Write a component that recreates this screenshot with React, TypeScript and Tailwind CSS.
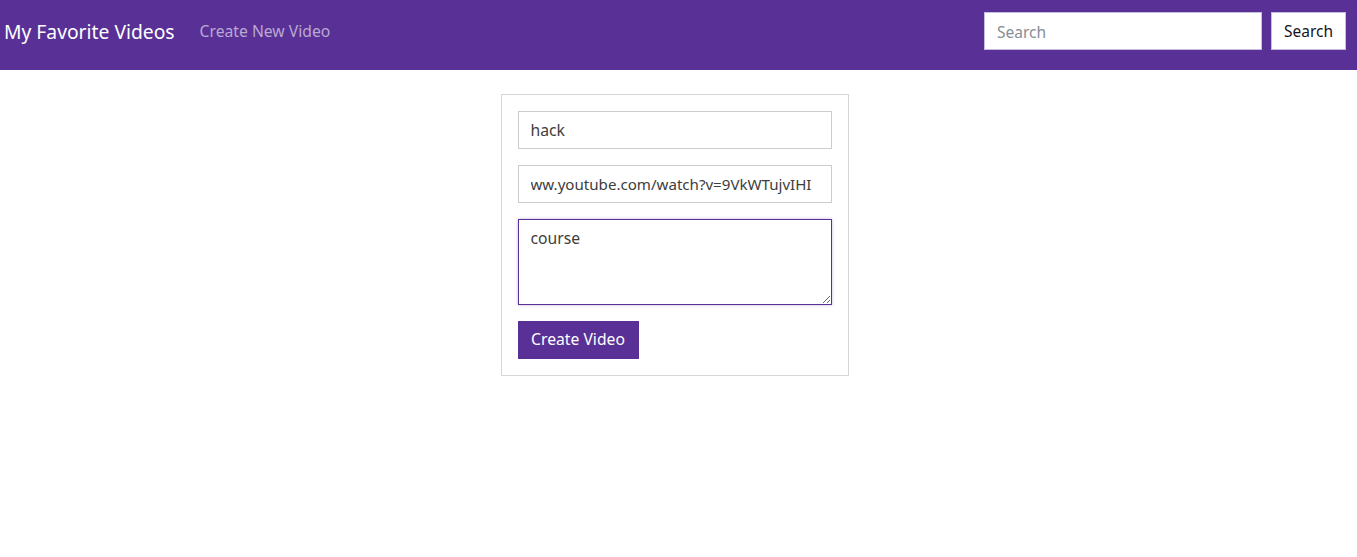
import React, { useState } from "react";

const App = () => {
  const [title, setTitle] = useState("hack");
  const [url, setUrl] = useState("ww.youtube.com/watch?v=9VkWTujvIHI");
  const [desc, setDesc] = useState("course");

  return (
    <div className="min-h-[557px] bg-white font-['Noto_Sans',sans-serif] text-[#444]">
      <nav className="flex h-[70px] items-start bg-[#593196] pl-[4px] pr-[11px] pt-[12px]">
        <a href="#" className="mr-[25px] flex h-[40px] items-center text-[19.3px] text-white">
          My Favorite Videos
        </a>
        <a href="#" className="flex h-[40px] items-center text-[15.7px] text-[#b9a8d3]">
          Create New Video
        </a>
        <form className="ml-auto flex gap-[9px]">
          <input
            type="text"
            placeholder="Search"
            className="h-[38px] w-[278px] border border-[#c7bcdb] bg-white px-[12px] pt-[1px] text-[15.5px] text-[#444] outline-none placeholder:text-[#868e96]"
          />
          <button
            type="button"
            className="h-[38px] w-[75px] border border-[#c7bcdb] bg-white pt-[1px] text-[15.5px] text-[#17141f]"
          >
            Search
          </button>
        </form>
      </nav>

      <div className="flex justify-center pr-[8px] pt-[24px]">
        <form className="flex w-[348px] flex-col gap-[16px] border border-[#d6d6d6] p-[16px]">
          <input
            type="text"
            value={title}
            onChange={(e) => setTitle(e.target.value)}
            className="h-[38px] w-full border border-[#cccccc] px-[12px] text-[15.7px] text-[#3d3d3d] outline-none"
          />
          <input
            type="text"
            value={url}
            onChange={(e) => setUrl(e.target.value)}
            className="h-[38px] w-full border border-[#cccccc] px-[12px] text-[15.1px] text-[#3d3d3d] outline-none"
          />
          <textarea
            value={desc}
            onChange={(e) => setDesc(e.target.value)}
            className="h-[86px] w-full border border-[#593196] px-[12px] py-[6px] text-[15.7px] leading-[24px] text-[#3d3d3d] shadow-[0_0_3px_rgba(89,49,150,0.35)] outline-none"
          />
          <div>
            <button
              type="button"
              className="h-[38px] w-[121px] bg-[#593196] text-[15.7px] text-white"
            >
              Create Video
            </button>
          </div>
        </form>
      </div>
    </div>
  );
};

export default App;
